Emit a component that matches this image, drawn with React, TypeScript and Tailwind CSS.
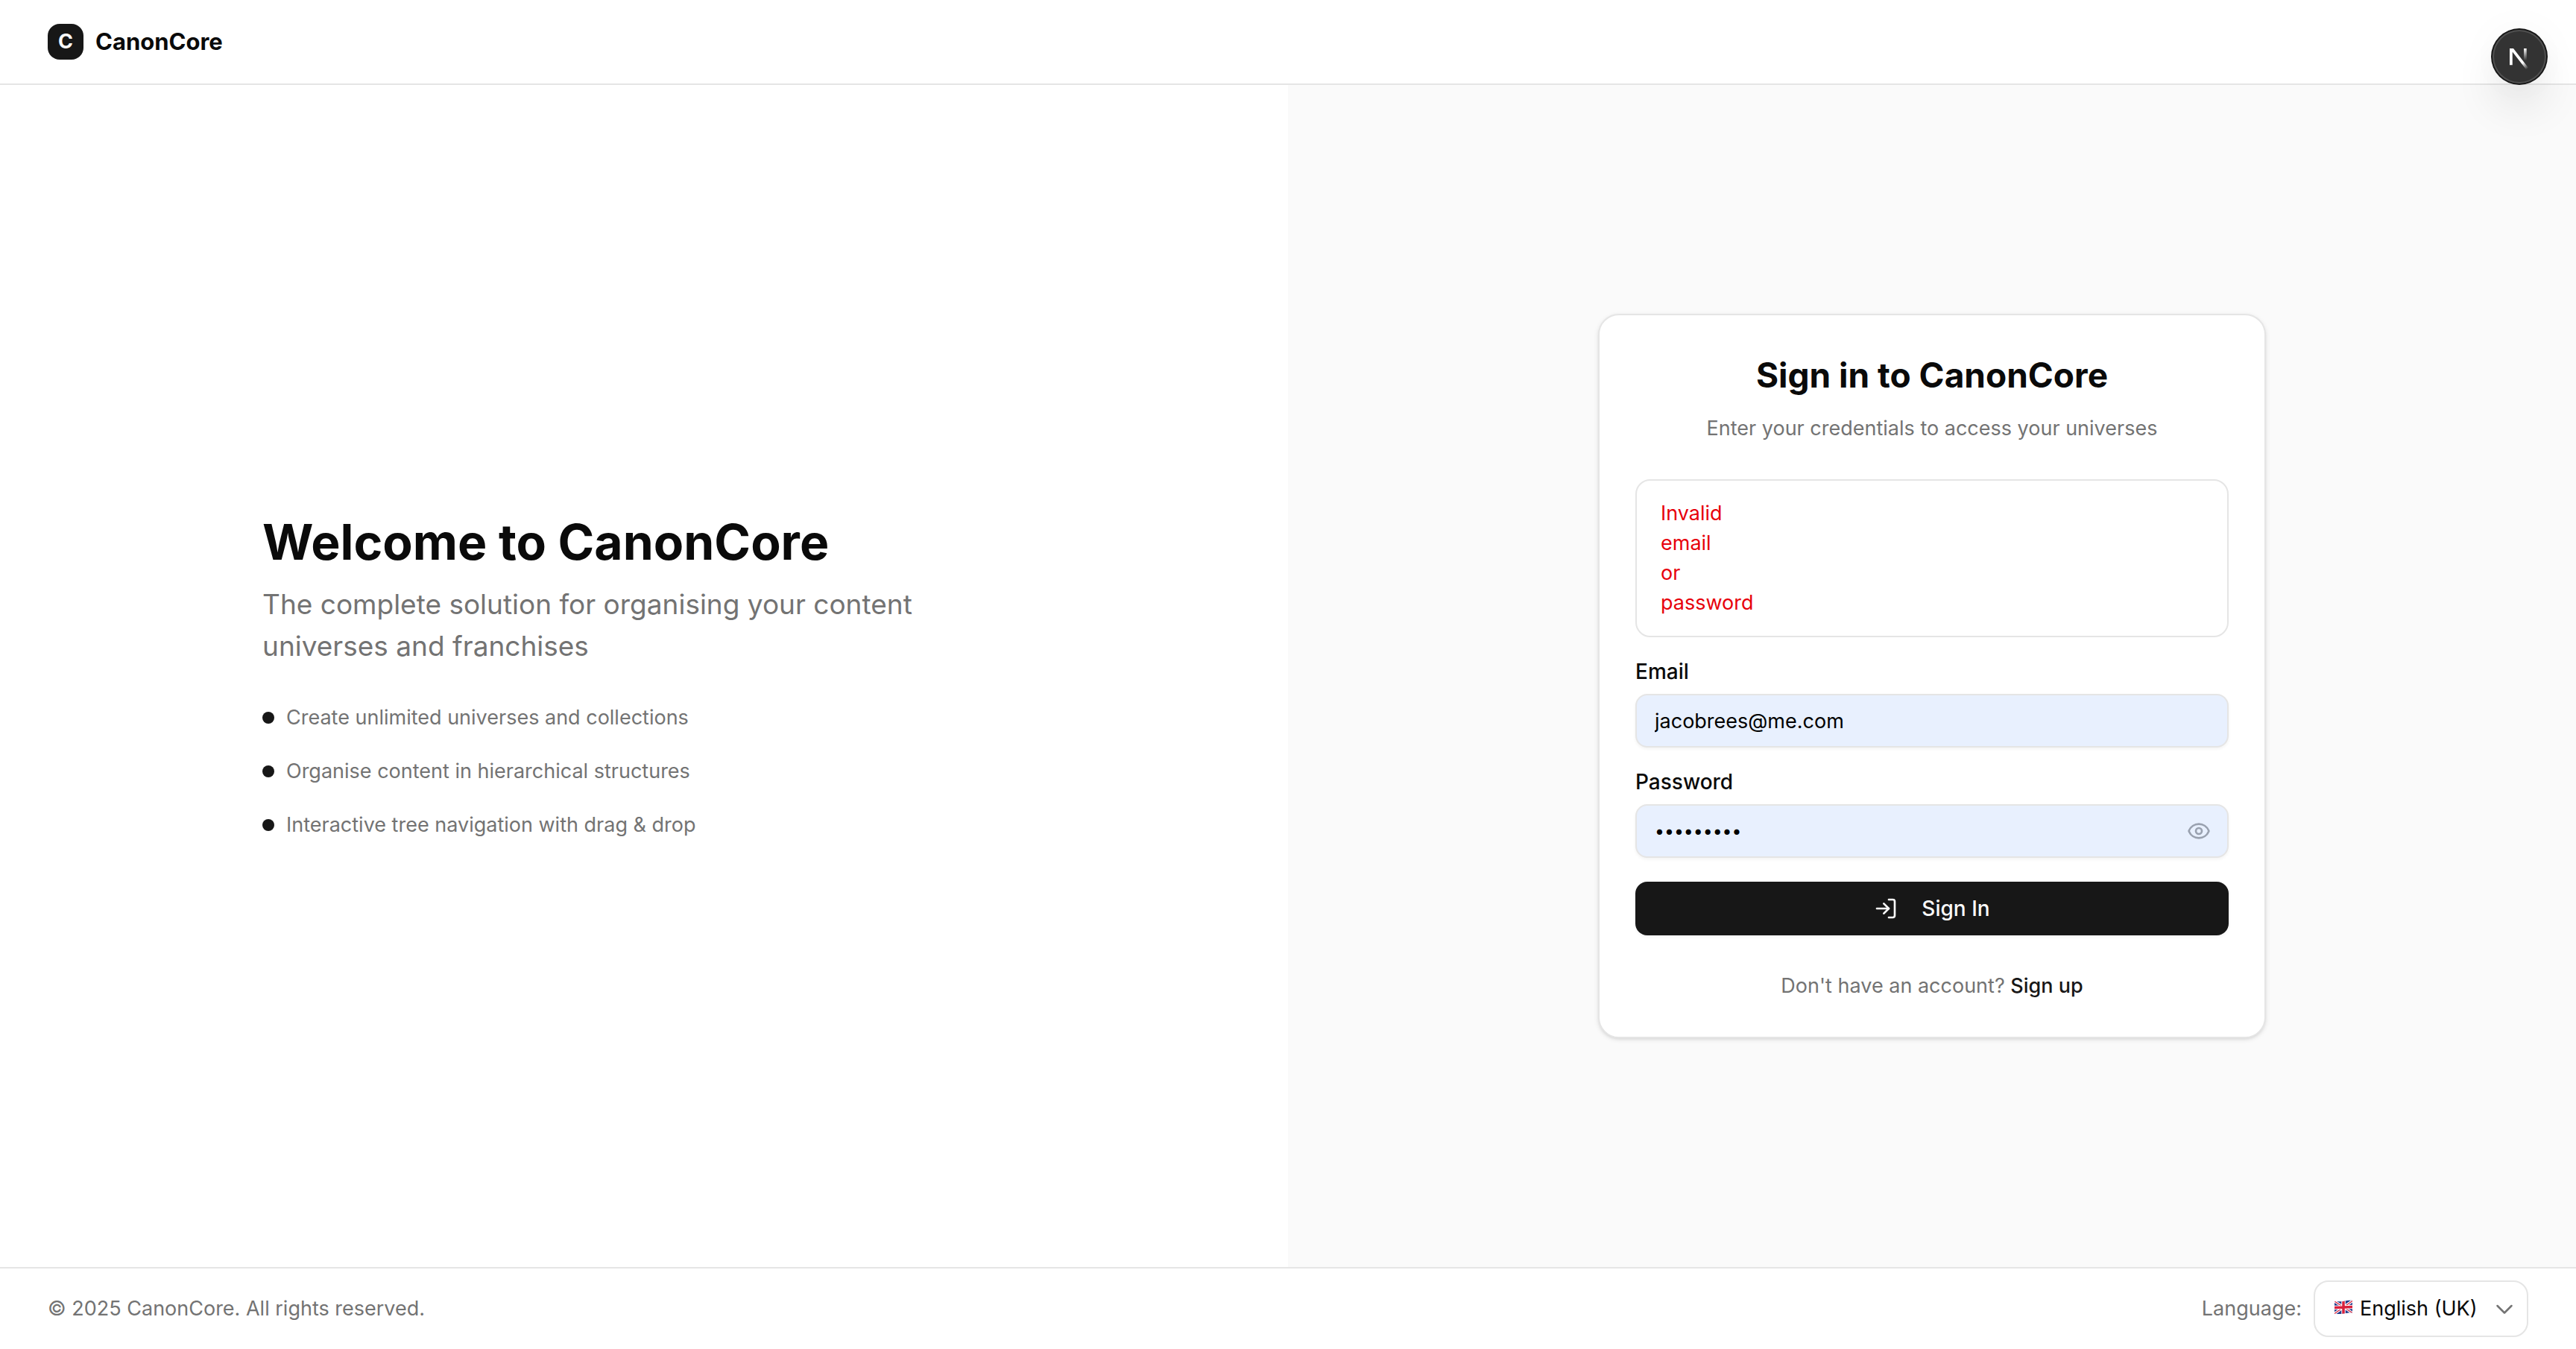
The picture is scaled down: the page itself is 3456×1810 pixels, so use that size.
import { useState } from "react";
import { Eye } from "lucide-react";

const features = [
  "Create unlimited universes and collections",
  "Organise content in hierarchical structures",
  "Interactive tree navigation with drag & drop",
];

const errorWords = ["Invalid", "email", "or", "password"];

function SignInIcon() {
  return (
    <svg
      className="size-8"
      viewBox="0 0 24 24"
      fill="none"
      stroke="currentColor"
      strokeWidth="2"
      strokeLinecap="round"
      strokeLinejoin="round"
      aria-hidden="true"
    >
      <path d="M15 3h4a2 2 0 0 1 2 2v14a2 2 0 0 1-2 2h-4" />
      <path d="M10 17l5-5-5-5" />
      <path d="M15 12H3" />
    </svg>
  );
}

function UkFlag({ className }: { className?: string }) {
  return (
    <svg className={className} viewBox="0 0 24 20" aria-hidden="true">
      <defs>
        <clipPath id="flag-wave">
          <path d="M0 2.4C4 1 7 3 12 2S20 .6 24 1V17.400C20 17 17 17.800 12 18.600S4 18.600 0 19Z" />
        </clipPath>
      </defs>
      <g clipPath="url(#flag-wave)">
        <rect width="24" height="20" fill="#1f3a8a" />
        <path d="M0 2 24 17.500M24 1.500 0 18.500" stroke="#fff" strokeWidth="3.500" />
        <path d="M0 2 24 17.500M24 1.500 0 18.500" stroke="#d8203c" strokeWidth="1.200" />
        <path d="M12 0V20M0 10.500 24 9.500" stroke="#fff" strokeWidth="5.500" />
        <path d="M12 0V20M0 10.500 24 9.500" stroke="#d8203c" strokeWidth="3.500" />
      </g>
    </svg>
  );
}

function DevBadge() {
  return (
    <button
      type="button"
      aria-label="Open developer tools"
      className="fixed top-[38px] right-[38px] size-[76px] rounded-full shadow-[0_32px_64px_-16px_rgba(0,0,0,0.24),0_4px_60px_rgba(0,0,0,0.04)]"
    >
      <svg className="size-full" viewBox="0 0 38 38" fill="none" aria-hidden="true">
        <defs>
          <linearGradient id="n-diagonal" x1="9.96" y1="11.12" x2="15.48" y2="17.97" gradientUnits="userSpaceOnUse">
            <stop stopColor="#fff" />
            <stop offset="0.6" stopColor="#fff" stopOpacity="0" />
          </linearGradient>
          <linearGradient id="n-stem" x1="11.82" y1="1.4" x2="11.79" y2="9.63" gradientUnits="userSpaceOnUse">
            <stop stopColor="#fff" />
            <stop offset="1" stopColor="#fff" stopOpacity="0" />
          </linearGradient>
          <clipPath id="n-clip">
            <rect x="0" y="1.500" width="16" height="16" />
          </clipPath>
        </defs>
        <circle cx="19" cy="19" r="19" fill="#171717" />
        <circle cx="19" cy="19" r="18" fill="#505050" />
        <circle cx="19" cy="19" r="17" fill="#333" />
        <g transform="translate(11.1 12)">
          <g clipPath="url(#n-clip)">
            <path d="M13.3 15.2 2.34 1V12.6" stroke="url(#n-diagonal)" strokeWidth="1.86" />
          </g>
          <path d="M11.825 1.5V13.1" stroke="url(#n-stem)" strokeWidth="1.86" />
        </g>
      </svg>
    </button>
  );
}

export default function App() {
  const [email, setEmail] = useState("jacobrees@me.com");
  const [password, setPassword] = useState("universe9");
  const [visible, setVisible] = useState(false);

  return (
    <div className="flex min-h-screen flex-col bg-white font-['Inter',sans-serif] text-[27px] leading-10 text-neutral-950 antialiased">
      <header className="flex h-[114px] items-center border-b-2 border-neutral-200 px-16">
        <a href="#home" className="flex items-center gap-4">
          <span className="flex size-12 items-center justify-center rounded-2xl bg-neutral-900 text-[27px] font-bold text-neutral-50">
            C
          </span>
          <span className="text-[31px] font-bold">CanonCore</span>
        </a>
      </header>

      <main className="grid flex-1 grid-cols-2">
        <section className="flex items-center justify-center">
          <div className="w-full max-w-5xl">
            <h1 className="text-[66px] leading-20 font-bold">Welcome to CanonCore</h1>
            <p className="mt-4 max-w-4xl text-[37px] leading-14 text-neutral-500">
              The complete solution for organising your content universes and franchises
            </p>
            <ul className="mt-12 flex flex-col gap-8 text-neutral-500">
              {features.map((feature) => (
                <li key={feature} className="flex items-center gap-4">
                  <span className="size-4 rounded-full bg-neutral-900" />
                  {feature}
                </li>
              ))}
            </ul>
          </div>
        </section>

        <section className="flex items-center justify-center bg-neutral-50">
          <div className="w-full max-w-4xl rounded-[28px] border-2 border-neutral-200 bg-white p-12 shadow-[0_2px_6px_rgba(0,0,0,0.1),0_2px_4px_-2px_rgba(0,0,0,0.1)]">
            <div className="flex flex-col gap-5 text-center">
              <h2 className="text-[46px] leading-16 font-bold">Sign in to CanonCore</h2>
              <p className="text-neutral-500">Enter your credentials to access your universes</p>
            </div>

            <form className="mt-12 flex flex-col gap-8" onSubmit={(e) => e.preventDefault()}>
              <div role="alert" className="rounded-[20px] border-2 border-neutral-200 px-8 py-6 text-[#e7000b]">
                {errorWords.map((word) => (
                  <p key={word}>{word}</p>
                ))}
              </div>

              <div className="flex flex-col gap-4">
                <label htmlFor="email" className="text-[28px] leading-7 font-medium">
                  Email
                </label>
                <input
                  id="email"
                  type="email"
                  value={email}
                  onChange={(e) => setEmail(e.target.value)}
                  className="h-18 rounded-2xl border-2 border-neutral-200 bg-[#e8f0fe] px-6 text-black shadow-[0_2px_4px_rgba(0,0,0,0.05)]"
                />
              </div>

              <div className="flex flex-col gap-4">
                <label htmlFor="password" className="text-[28px] leading-7 font-medium">
                  Password
                </label>
                <div className="relative">
                  <input
                    id="password"
                    type={visible ? "text" : "password"}
                    value={password}
                    onChange={(e) => setPassword(e.target.value)}
                    className={
                      visible
                        ? "h-18 w-full rounded-2xl border-2 border-neutral-200 bg-[#e8f0fe] pr-20 pl-6 text-black shadow-[0_2px_4px_rgba(0,0,0,0.05)]"
                        : "h-18 w-full rounded-2xl border-2 border-neutral-200 bg-[#e8f0fe] pr-20 pl-6 text-[23px] text-black shadow-[0_2px_4px_rgba(0,0,0,0.05)]"
                    }
                  />
                  <button
                    type="button"
                    aria-label="Show password"
                    onClick={() => setVisible(!visible)}
                    className="absolute inset-y-0 right-6 flex items-center text-gray-400"
                  >
                    <Eye className="size-8" />
                  </button>
                </div>
              </div>

              <button
                type="submit"
                className="flex h-18 items-center justify-center gap-8 rounded-2xl bg-neutral-900 text-[28px] font-medium text-neutral-50 shadow-[0_2px_4px_rgba(0,0,0,0.05)]"
              >
                <SignInIcon />
                Sign In
              </button>
            </form>

            <p className="mt-12 text-center text-neutral-500">
              Don't have an account?{" "}
              <a href="#sign-up" className="font-medium text-neutral-900">
                Sign up
              </a>
            </p>
          </div>
        </section>
      </main>

      <footer className="flex items-center justify-between border-t-2 border-neutral-200 px-16 py-4 text-neutral-500">
        <p>© 2025 CanonCore. All rights reserved.</p>
        <div className="flex items-center gap-4">
          <label htmlFor="language">Language:</label>
          <div className="relative">
            <select
              id="language"
              defaultValue="en-GB"
              className="h-19 w-72 appearance-none rounded-[20px] border-2 border-neutral-200 bg-white pr-16 pl-[60px] text-neutral-950"
            >
              <option value="en-GB">English (UK)</option>
              <option value="en-US">English (US)</option>
            </select>
            <UkFlag className="pointer-events-none absolute top-[26px] left-7 h-5 w-6" />
            <svg
              className="pointer-events-none absolute top-[22px] right-4 size-8"
              viewBox="0 0 32 32"
              fill="none"
              stroke="currentColor"
              strokeWidth="2.5"
              strokeLinecap="round"
              strokeLinejoin="round"
              aria-hidden="true"
            >
              <path d="M6.500 12 16 21.500 25.500 12" />
            </svg>
          </div>
        </div>
      </footer>

      <DevBadge />
    </div>
  );
}
